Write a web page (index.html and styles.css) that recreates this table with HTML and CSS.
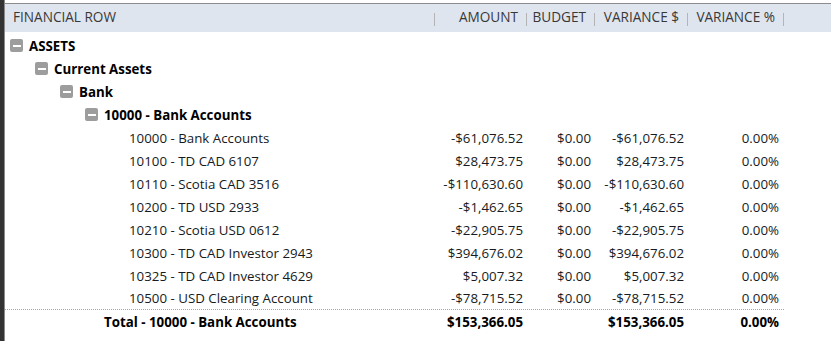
FILE: index.html
```html
<!DOCTYPE html>
<html>
<head>
<meta charset="utf-8">
<link rel="stylesheet" href="styles.css">
</head>
<body>
<div class="frame">
  <div class="sidebar"></div>
  <div class="report">
    <div class="head row-grid">
      <div class="hcell hname"><span class="htext">FINANCIAL ROW</span><span class="sep"></span></div>
      <div class="hcell"><span class="htext">AMOUNT</span><span class="sep"></span></div>
      <div class="hcell"><span class="htext">BUDGET</span><span class="sep"></span></div>
      <div class="hcell"><span class="htext">VARIANCE $</span><span class="sep"></span></div>
      <div class="hcell"><span class="htext">VARIANCE %</span><span class="sep"></span></div>
    </div>
    <div class="body">
      <div class="row-grid row group lvl0"><div class="name"><span class="tog"></span>ASSETS</div></div>
      <div class="row-grid row group lvl1"><div class="name"><span class="tog"></span>Current Assets</div></div>
      <div class="row-grid row group lvl2"><div class="name"><span class="tog"></span>Bank</div></div>
      <div class="row-grid row group lvl3"><div class="name"><span class="tog"></span>10000 - Bank Accounts</div></div>

      <div class="row-grid row leaf"><div class="name">10000 - Bank Accounts</div><div class="num">-$61,076.52</div><div class="num">$0.00</div><div class="num">-$61,076.52</div><div class="num pct">0.00%</div></div>
      <div class="row-grid row leaf"><div class="name">10100 - TD CAD 6107</div><div class="num">$28,473.75</div><div class="num">$0.00</div><div class="num">$28,473.75</div><div class="num pct">0.00%</div></div>
      <div class="row-grid row leaf"><div class="name">10110 - Scotia CAD 3516</div><div class="num">-$110,630.60</div><div class="num">$0.00</div><div class="num">-$110,630.60</div><div class="num pct">0.00%</div></div>
      <div class="row-grid row leaf"><div class="name">10200 - TD USD 2933</div><div class="num">-$1,462.65</div><div class="num">$0.00</div><div class="num">-$1,462.65</div><div class="num pct">0.00%</div></div>
      <div class="row-grid row leaf"><div class="name">10210 - Scotia USD 0612</div><div class="num">-$22,905.75</div><div class="num">$0.00</div><div class="num">-$22,905.75</div><div class="num pct">0.00%</div></div>
      <div class="row-grid row leaf"><div class="name">10300 - TD CAD Investor 2943</div><div class="num">$394,676.02</div><div class="num">$0.00</div><div class="num">$394,676.02</div><div class="num pct">0.00%</div></div>
      <div class="row-grid row leaf"><div class="name">10325 - TD CAD Investor 4629</div><div class="num">$5,007.32</div><div class="num">$0.00</div><div class="num">$5,007.32</div><div class="num pct">0.00%</div></div>
      <div class="row-grid row leaf last"><div class="name">10500 - USD Clearing Account</div><div class="num">-$78,715.52</div><div class="num">$0.00</div><div class="num">-$78,715.52</div><div class="num pct">0.00%</div></div>

      <div class="row-grid row total"><div class="name">Total - 10000 - Bank Accounts</div><div class="num">$153,366.05</div><div class="num"></div><div class="num">$153,366.05</div><div class="num pct">0.00%</div></div>
    </div>
  </div>
</div>
</body>
</html>
```

FILE: styles.css
```css
html, body {
  margin: 0;
  padding: 0;
  background: #ffffff;
}
body {
  font-family: "Open Sans", "Liberation Sans", sans-serif;
  font-size: 13.3px;
  color: #161a22;
  width: 831px;
  height: 341px;
  overflow: hidden;
}
.frame {
  display: flex;
  height: 341px;
}
.sidebar {
  width: 4px;
  flex: none;
  background: #333333;
  border-right: 1px solid #8a8a8a;
}
.report {
  flex: 1;
  display: flex;
  flex-direction: column;
  padding-top: 3px;
  background: #fff;
}
.row-grid {
  display: grid;
  grid-template-columns: 430px 92px 68px 93px 96px;
}
.head {
  background: #dfe5ef;
  border-top: 1px solid #8c8c8c;
  height: 28px;
  color: #383838;
  font-size: 13.6px;
}
.hcell {
  display: flex;
  align-items: center;
  justify-content: flex-end;
  gap: 8px;
  padding-bottom: 3px;
}
.hname {
  justify-content: space-between;
  padding-left: 8px;
}
.sep {
  width: 1px;
  height: 13px;
  margin-top: 5px;
  background: #b4b4b4;
}
.body {
  padding-top: 2px;
}
.row {
  height: 23px;
  align-items: center;
  box-sizing: border-box;
}
.name {
  display: flex;
  align-items: center;
  white-space: nowrap;
}
.group .name {
  font-weight: 700;
  color: #000;
}
.lvl0 .name { padding-left: 5px; }
.lvl1 .name { padding-left: 30px; }
.lvl2 .name { padding-left: 55px; }
.lvl3 .name { padding-left: 80px; }
.tog {
  width: 13px;
  height: 13px;
  border-radius: 2px;
  background: #9d9d9d;
  margin-right: 6px;
  position: relative;
  display: flex;
  align-items: center;
  justify-content: center;
}
.tog::before {
  content: "";
  width: 8px;
  height: 2px;
  background: #fff;
}
.leaf .name { padding-left: 124px; }
.total .name {
  padding-left: 99px;
  font-weight: 700;
  color: #000;
}
.num {
  text-align: right;
  padding-right: 4px;
  white-space: nowrap;
}
.pct { padding-right: 5px; }
.total .num {
  font-weight: 700;
  color: #000;
}
.last {
  border-bottom: 1px dotted #a8a8a8;
  width: 779px;
}
```
